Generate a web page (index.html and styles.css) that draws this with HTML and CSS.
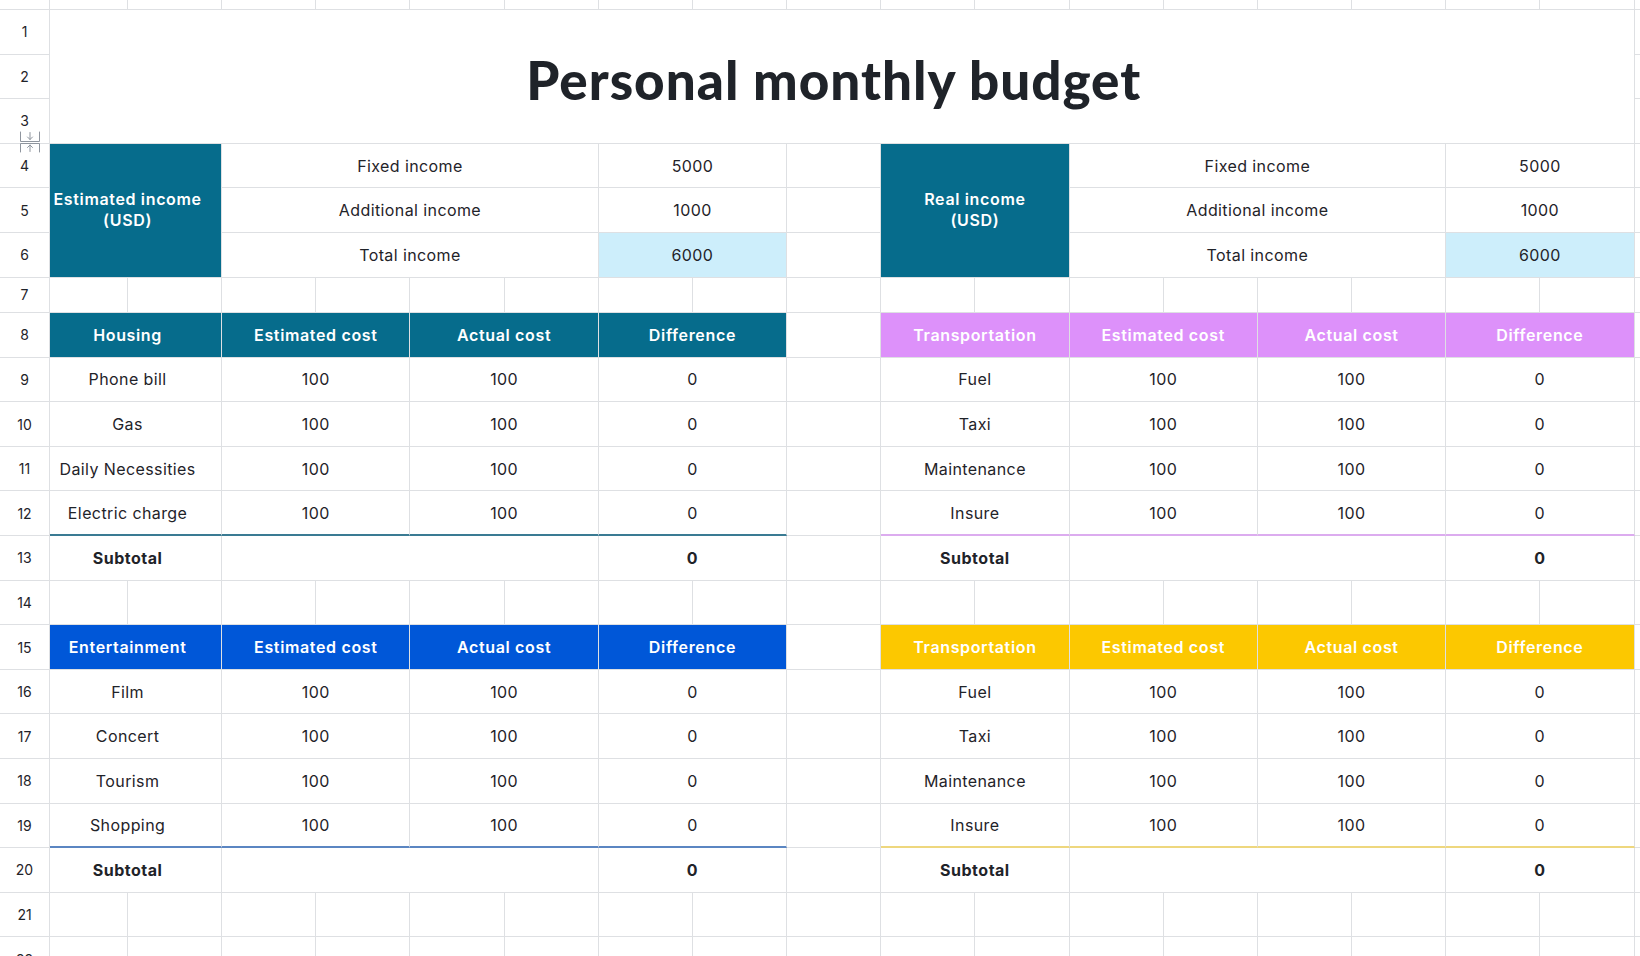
FILE: index.html
```html
<!DOCTYPE html>
<html lang="en">
<head>
<meta charset="utf-8">
<title>Personal monthly budget</title>
<link rel="stylesheet" href="styles.css">
</head>
<body>
<div class="sheet">
  <!-- row 0 (partial) -->
  <div class="rh"></div><div></div><div></div><div></div><div></div><div></div><div></div><div></div><div></div><div></div><div></div><div></div><div></div><div></div><div></div><div></div><div></div><div></div><div></div>

  <!-- rows 1-3 -->
  <div class="rh">1</div>
  <div class="title s17 r3"><h1>Personal monthly budget</h1></div>
  <div></div>
  <div class="rh">2</div><div></div>
  <div class="rh rh-icon">3
    <svg class="collapse" width="22" height="22" viewBox="0 0 22 22" fill="none" stroke="#8f959e" stroke-width="1" stroke-linecap="round" stroke-linejoin="round">
      <path d="M1.5 1v9.5h19V1"/>
      <path d="M11 1.5v7M8.5 6l2.5 2.5L13.5 6"/>
      <path d="M1.5 21v-8.5h19V21"/>
      <path d="M11 20.5v-6.5M8.5 16.5L11 14l2.5 2.5"/>
    </svg>
  </div>
  <div></div>

  <!-- row 4 -->
  <div class="rh">4</div>
  <div class="s2 r3 h teal wrap ca">Estimated income<br>(USD)</div>
  <div class="s4">Fixed income</div>
  <div class="s2">5000</div>
  <div></div>
  <div class="s2 r3 h teal wrap">Real income<br>(USD)</div>
  <div class="s4">Fixed income</div>
  <div class="s2">5000</div>
  <div></div>

  <!-- row 5 -->
  <div class="rh">5</div>
  <div class="s4">Additional income</div>
  <div class="s2">1000</div>
  <div></div>
  <div class="s4">Additional income</div>
  <div class="s2">1000</div>
  <div></div>

  <!-- row 6 -->
  <div class="rh">6</div>
  <div class="s4">Total income</div>
  <div class="s2 total">6000</div>
  <div></div>
  <div class="s4">Total income</div>
  <div class="s2 total">6000</div>
  <div></div>

  <!-- row 7 -->
  <div class="rh">7</div><div></div><div></div><div></div><div></div><div></div><div></div><div></div><div></div><div></div><div></div><div></div><div></div><div></div><div></div><div></div><div></div><div></div><div></div>

  <!-- row 8 -->
  <div class="rh">8</div>
  <div class="s2 h teal ca">Housing</div>
  <div class="s2 h teal">Estimated cost</div>
  <div class="s2 h teal">Actual cost</div>
  <div class="s2 h teal">Difference</div>
  <div></div>
  <div class="s2 h pink">Transportation</div>
  <div class="s2 h pink">Estimated cost</div>
  <div class="s2 h pink">Actual cost</div>
  <div class="s2 h pink">Difference</div>
  <div></div>

  <!-- row 9 -->
  <div class="rh">9</div>
  <div class="s2 ca">Phone bill</div><div class="s2">100</div><div class="s2">100</div><div class="s2">0</div>
  <div></div>
  <div class="s2">Fuel</div><div class="s2">100</div><div class="s2">100</div><div class="s2">0</div>
  <div></div>

  <!-- row 10 -->
  <div class="rh">10</div>
  <div class="s2 ca">Gas</div><div class="s2">100</div><div class="s2">100</div><div class="s2">0</div>
  <div></div>
  <div class="s2">Taxi</div><div class="s2">100</div><div class="s2">100</div><div class="s2">0</div>
  <div></div>

  <!-- row 11 -->
  <div class="rh">11</div>
  <div class="s2 ca">Daily Necessities</div><div class="s2">100</div><div class="s2">100</div><div class="s2">0</div>
  <div></div>
  <div class="s2">Maintenance</div><div class="s2">100</div><div class="s2">100</div><div class="s2">0</div>
  <div></div>

  <!-- row 12 -->
  <div class="rh">12</div>
  <div class="s2 ca end-teal">Electric charge</div><div class="s2 end-teal">100</div><div class="s2 end-teal">100</div><div class="s2 end-teal">0</div>
  <div></div>
  <div class="s2 end-pink">Insure</div><div class="s2 end-pink">100</div><div class="s2 end-pink">100</div><div class="s2 end-pink">0</div>
  <div></div>

  <!-- row 13 -->
  <div class="rh">13</div>
  <div class="s2 ca bold">Subtotal</div><div class="s4"></div><div class="s2 bold">0</div>
  <div></div>
  <div class="s2 bold">Subtotal</div><div class="s4"></div><div class="s2 bold">0</div>
  <div></div>

  <!-- row 14 -->
  <div class="rh">14</div><div></div><div></div><div></div><div></div><div></div><div></div><div></div><div></div><div></div><div></div><div></div><div></div><div></div><div></div><div></div><div></div><div></div><div></div>

  <!-- row 15 -->
  <div class="rh">15</div>
  <div class="s2 h blue ca">Entertainment</div>
  <div class="s2 h blue">Estimated cost</div>
  <div class="s2 h blue">Actual cost</div>
  <div class="s2 h blue">Difference</div>
  <div></div>
  <div class="s2 h yellow">Transportation</div>
  <div class="s2 h yellow">Estimated cost</div>
  <div class="s2 h yellow">Actual cost</div>
  <div class="s2 h yellow">Difference</div>
  <div></div>

  <!-- row 16 -->
  <div class="rh">16</div>
  <div class="s2 ca">Film</div><div class="s2">100</div><div class="s2">100</div><div class="s2">0</div>
  <div></div>
  <div class="s2">Fuel</div><div class="s2">100</div><div class="s2">100</div><div class="s2">0</div>
  <div></div>

  <!-- row 17 -->
  <div class="rh">17</div>
  <div class="s2 ca">Concert</div><div class="s2">100</div><div class="s2">100</div><div class="s2">0</div>
  <div></div>
  <div class="s2">Taxi</div><div class="s2">100</div><div class="s2">100</div><div class="s2">0</div>
  <div></div>

  <!-- row 18 -->
  <div class="rh">18</div>
  <div class="s2 ca">Tourism</div><div class="s2">100</div><div class="s2">100</div><div class="s2">0</div>
  <div></div>
  <div class="s2">Maintenance</div><div class="s2">100</div><div class="s2">100</div><div class="s2">0</div>
  <div></div>

  <!-- row 19 -->
  <div class="rh">19</div>
  <div class="s2 ca end-blue">Shopping</div><div class="s2 end-blue">100</div><div class="s2 end-blue">100</div><div class="s2 end-blue">0</div>
  <div></div>
  <div class="s2 end-yellow">Insure</div><div class="s2 end-yellow">100</div><div class="s2 end-yellow">100</div><div class="s2 end-yellow">0</div>
  <div></div>

  <!-- row 20 -->
  <div class="rh">20</div>
  <div class="s2 ca bold">Subtotal</div><div class="s4"></div><div class="s2 bold">0</div>
  <div></div>
  <div class="s2 bold">Subtotal</div><div class="s4"></div><div class="s2 bold">0</div>
  <div></div>

  <!-- row 21 -->
  <div class="rh">21</div><div></div><div></div><div></div><div></div><div></div><div></div><div></div><div></div><div></div><div></div><div></div><div></div><div></div><div></div><div></div><div></div><div></div><div></div>

  <!-- row 22 (partial) -->
  <div class="rh">22</div><div></div><div></div><div></div><div></div><div></div><div></div><div></div><div></div><div></div><div></div><div></div><div></div><div></div><div></div><div></div><div></div><div></div><div></div>
</div>
</body>
</html>
```

FILE: styles.css
```css
* {
  box-sizing: border-box;
  margin: 0;
  padding: 0;
}

html,
body {
  width: 1640px;
  height: 956px;
  overflow: hidden;
  background: #ffffff;
}

body {
  font-family: Inter, "Noto Sans", "Liberation Sans", sans-serif;
  font-size: 16px;
  color: #1f2329;
}

.sheet {
  display: grid;
  grid-template-columns: 50px 78px repeat(17, 94.17px);
  grid-template-rows: 10px repeat(6, 44.6px) 35.5px repeat(15, 44.6px);
}

.sheet > div {
  display: flex;
  align-items: center;
  justify-content: center;
  text-align: center;
  white-space: nowrap;
  letter-spacing: 0.4px;
  border-right: 1px solid #dee0e3;
  border-bottom: 1px solid #dee0e3;
  background: #ffffff;
}

.sheet > .rh {
  font-size: 14px;
  letter-spacing: 0;
  color: #1f2329;
}

/* column A is partly scrolled under the row header */
.sheet > .ca {
  padding-right: 16px;
}

.rh-icon {
  position: relative;
}

.collapse {
  position: absolute;
  left: 19px;
  top: 32px;
  z-index: 2;
}

.s2 { grid-column: span 2; }
.s4 { grid-column: span 4; }
.s17 { grid-column: span 17; }
.r3 { grid-row: span 3; }

.title h1 {
  font-family: Lato, "Noto Sans", sans-serif;
  font-weight: 900;
  font-size: 53px;
  color: #1f2329;
  letter-spacing: 1px;
  margin-right: 16px;
  margin-top: 6px;
}

.sheet > .h {
  color: #ffffff;
  font-weight: 600;
  letter-spacing: 0.65px;
}

.sheet > .wrap {
  white-space: normal;
  line-height: 21px;
}

.sheet > .teal { background: #066c8c; }
.sheet > .pink { background: #dd91fa; }
.sheet > .blue { background: #0057d8; }
.sheet > .yellow { background: #fcc800; }

.sheet > .total { background: #cdeefb; }

.sheet > .bold {
  font-weight: 700;
  letter-spacing: 0.5px;
}

.sheet > .end-teal { border-bottom: 2px solid #3a7b93; }
.sheet > .end-pink { border-bottom: 2px solid #dcacef; }
.sheet > .end-blue { border-bottom: 2px solid #5b86c2; }
.sheet > .end-yellow { border-bottom: 2px solid #eed77e; }
```
